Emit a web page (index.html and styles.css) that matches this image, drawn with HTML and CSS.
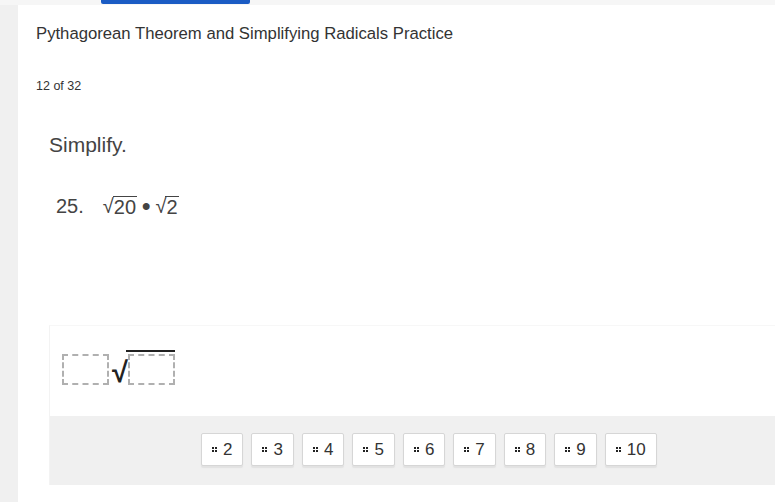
FILE: index.html
```html
<!DOCTYPE html>
<html lang="en">

<head>
    <meta charset="UTF-8">
    <meta name="viewport" content="width=device-width, initial-scale=1.0">
    <link rel="stylesheet" href="styles.css">
    <title>Practice</title>
</head>

<body>
    <div class="topBar">
        <span class="progress"></span>
    </div>
    <div class="page">
        <div class="side"></div>
        <div class="card">
            <h1 class="title">Pythagorean Theorem and Simplifying Radicals Practice</h1>
            <div class="counter">12 of 32</div>

            <div class="question">
                <div class="prompt">Simplify.</div>
                <div class="problem">
                    <span class="num">25.</span>
                    <span class="rad"><span class="sign">&radic;</span><span class="under">20</span></span>
                    <span class="dot">&bull;</span>
                    <span class="rad"><span class="sign">&radic;</span><span class="under">2</span></span>
                </div>
            </div>

            <div class="answer">
                <div class="slots">
                    <span class="slot"></span>
                    <span class="rootSign">&radic;</span>
                    <span class="rootBox"><span class="slot"></span></span>
                </div>
                <div class="tray">
                    <span class="tile"><i class="grip"></i>2</span>
                    <span class="tile"><i class="grip"></i>3</span>
                    <span class="tile"><i class="grip"></i>4</span>
                    <span class="tile"><i class="grip"></i>5</span>
                    <span class="tile"><i class="grip"></i>6</span>
                    <span class="tile"><i class="grip"></i>7</span>
                    <span class="tile"><i class="grip"></i>8</span>
                    <span class="tile"><i class="grip"></i>9</span>
                    <span class="tile"><i class="grip"></i>10</span>
                </div>
            </div>
        </div>
    </div>
</body>

</html>
```

FILE: styles.css
```css
* {
    margin: 0;
    padding: 0;
    box-sizing: border-box;
}

body {
    width: 775px;
    height: 502px;
    overflow: hidden;
    background-color: #fff;
    font-family: "Liberation Sans", Arial, sans-serif;
    color: #333;
}

.topBar {
    height: 5px;
    background-color: #f6f6f6;
    padding-left: 101px;
}

.topBar .progress {
    display: block;
    width: 149px;
    height: 4px;
    background-color: #1b5cc4;
    border-radius: 0 0 2px 2px;
}

.page {
    display: flex;
    height: 497px;
}

.side {
    width: 18px;
    background-color: #f0f0f0;
}

.card {
    flex: 1;
    padding: 19px 0 0 18px;
}

.title {
    font-size: 16.7px;
    font-weight: normal;
    color: #333;
    line-height: 20px;
}

.counter {
    margin-top: 34px;
    font-size: 12.5px;
    line-height: 16px;
    color: #333;
}

.question {
    padding: 38px 0 0 13px;
    color: #444;
}

.prompt {
    font-size: 21px;
    line-height: 26px;
}

.problem {
    display: flex;
    align-items: flex-end;
    margin: 36px 0 0 7px;
    font-size: 20px;
    line-height: 24px;
}

.problem .num {
    margin-right: 19px;
}

.rad {
    display: flex;
    align-items: flex-end;
}

.rad .sign {
    font-size: 20px;
    line-height: 24px;
    margin-right: -1px;
}

.rad .under {
    border-top: 1.5px solid #444;
    padding: 0 1px;
    line-height: 21px;
}

.problem .dot {
    margin: 0 5px;
    font-size: 24px;
    font-weight: bold;
}

.answer {
    margin: 107px 0 0 13px;
    border-left: 1px solid #f3f3f3;
    border-top: 1px solid #f7f7f7;
}

.slots {
    display: flex;
    align-items: flex-end;
    height: 90px;
    padding: 0 0 31px 12px;
}

.slot {
    display: block;
    width: 47px;
    height: 31px;
    border: 2px dashed #b0b0b0;
}

.rootSign {
    font-size: 29px;
    line-height: 30px;
    color: #222;
    margin: 0 0 -2px 3px;
    font-weight: bold;
}

.rootBox {
    display: block;
    border-top: 2px solid #222;
    padding: 2px 0 0 2px;
    margin-left: -2px;
}

.tray {
    display: flex;
    gap: 8px;
    height: 69px;
    padding: 17px 0 0 151px;
    background-color: #f0f0f0;
}

.tile {
    display: flex;
    align-items: center;
    height: 33px;
    padding: 0 10px 0 10px;
    background-color: #fff;
    border: 1px solid #d6d6d6;
    border-radius: 2px;
    box-shadow: 0 2px 1px #e2e2e2;
    font-size: 17px;
    color: #333;
}

.grip {
    position: relative;
    display: inline-block;
    width: 5px;
    height: 5px;
    margin-right: 6px;
}

.grip::before {
    content: "";
    position: absolute;
    left: 0;
    top: 0;
    width: 2px;
    height: 2px;
    background-color: #222;
    box-shadow: 3px 0 #222, 0 3px #222, 3px 3px #222;
}
```
